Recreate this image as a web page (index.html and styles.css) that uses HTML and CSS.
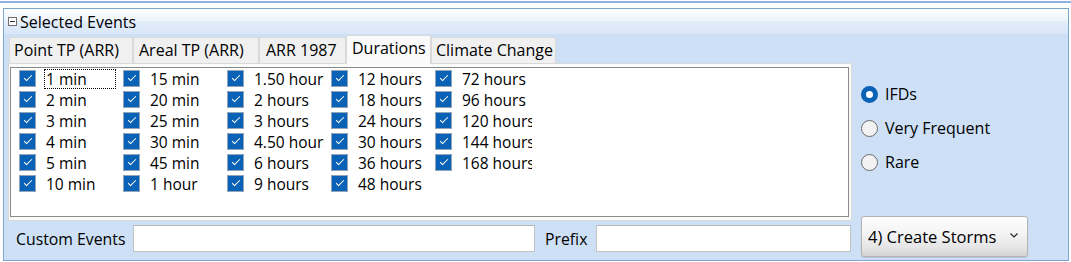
FILE: index.html
```html
<!DOCTYPE html>
<html>
<head>
    <meta charset="UTF-8">
    <meta name="viewport" content="width=device-width, initial-scale=1.0">
    <title>Selected Events</title>
    <link rel="stylesheet" href="styles.css">
</head>
<body>
    <div class="topline"></div>
    <div class="group">
        <div class="groupHead">
            <span class="collapse"></span>
            <span class="groupTitle">Selected Events</span>
        </div>
        <div class="groupBody">
            <div class="left">
                <div class="tabs">
                    <div class="tab tabPoint">Point TP (ARR)</div>
                    <div class="tab tabAreal">Areal TP (ARR)</div>
                    <div class="tab tab1987">ARR 1987</div>
                    <div class="tab tabDurations active">Durations</div>
                    <div class="tab tabClimate">Climate Change</div>
                </div>
                <div class="panel">
                    <div class="checkList">
                        <div class="item"><span class="cb"></span><span class="lbl focus">1 min</span></div>
                        <div class="item"><span class="cb"></span><span class="lbl">2 min</span></div>
                        <div class="item"><span class="cb"></span><span class="lbl">3 min</span></div>
                        <div class="item"><span class="cb"></span><span class="lbl">4 min</span></div>
                        <div class="item"><span class="cb"></span><span class="lbl">5 min</span></div>
                        <div class="item"><span class="cb"></span><span class="lbl">10 min</span></div>

                        <div class="item"><span class="cb"></span><span class="lbl">15 min</span></div>
                        <div class="item"><span class="cb"></span><span class="lbl">20 min</span></div>
                        <div class="item"><span class="cb"></span><span class="lbl">25 min</span></div>
                        <div class="item"><span class="cb"></span><span class="lbl">30 min</span></div>
                        <div class="item"><span class="cb"></span><span class="lbl">45 min</span></div>
                        <div class="item"><span class="cb"></span><span class="lbl">1 hour</span></div>

                        <div class="item"><span class="cb"></span><span class="lbl">1.50 hours</span></div>
                        <div class="item"><span class="cb"></span><span class="lbl">2 hours</span></div>
                        <div class="item"><span class="cb"></span><span class="lbl">3 hours</span></div>
                        <div class="item"><span class="cb"></span><span class="lbl">4.50 hours</span></div>
                        <div class="item"><span class="cb"></span><span class="lbl">6 hours</span></div>
                        <div class="item"><span class="cb"></span><span class="lbl">9 hours</span></div>

                        <div class="item"><span class="cb"></span><span class="lbl">12 hours</span></div>
                        <div class="item"><span class="cb"></span><span class="lbl">18 hours</span></div>
                        <div class="item"><span class="cb"></span><span class="lbl">24 hours</span></div>
                        <div class="item"><span class="cb"></span><span class="lbl">30 hours</span></div>
                        <div class="item"><span class="cb"></span><span class="lbl">36 hours</span></div>
                        <div class="item"><span class="cb"></span><span class="lbl">48 hours</span></div>

                        <div class="item"><span class="cb"></span><span class="lbl">72 hours</span></div>
                        <div class="item"><span class="cb"></span><span class="lbl">96 hours</span></div>
                        <div class="item"><span class="cb"></span><span class="lbl">120 hours</span></div>
                        <div class="item"><span class="cb"></span><span class="lbl">144 hours</span></div>
                        <div class="item"><span class="cb"></span><span class="lbl">168 hours</span></div>
                    </div>
                </div>
                <div class="fields">
                    <span class="fieldLabel customLabel">Custom Events</span>
                    <input type="text" class="textBox customBox">
                    <span class="fieldLabel prefixLabel">Prefix</span>
                    <input type="text" class="textBox prefixBox">
                </div>
            </div>
            <div class="right">
                <div class="radios">
                    <div class="radioRow"><span class="radio checked"></span><span class="radioText">IFDs</span></div>
                    <div class="radioRow"><span class="radio"></span><span class="radioText">Very Frequent</span></div>
                    <div class="radioRow"><span class="radio"></span><span class="radioText">Rare</span></div>
                </div>
                <button class="dropButton">
                    <span>4) Create Storms</span>
                    <svg class="chevron" width="8" height="5" viewBox="0 0 8 5"><polyline points="0.5,0.5 4,4 7.5,0.5" fill="none" stroke="#222" stroke-width="1.2"/></svg>
                </button>
            </div>
        </div>
    </div>
</body>
</html>
```

FILE: styles.css
```css
body {
    margin: 0;
    background: #fff;
    color: #000;
    font-family: "Open Sans", "Noto Sans", sans-serif;
}

.topline {
    height: 2px;
    margin-top: 1px;
    background: #8db2e3;
}

.group {
    margin: 5px 0 0 3px;
    width: 1066px;
    height: 253px;
    box-sizing: border-box;
    border: 1px solid #7ea3cf;
    background: #cde0f6;
    display: flex;
    flex-direction: column;
}

.groupHead {
    height: 25px;
    flex: none;
    display: flex;
    align-items: center;
    padding-left: 4px;
    background: linear-gradient(#fcfdfe 0%, #eff5fc 45%, #e3edf9 50%, #d9e7f8 100%);
}

.collapse {
    width: 9px;
    height: 9px;
    box-sizing: border-box;
    border: 1px solid #6f6f6f;
    background: #fff;
    display: flex;
    align-items: center;
    justify-content: center;
}

.collapse::before {
    content: "";
    width: 5px;
    height: 1px;
    background: #333;
}

.groupTitle {
    margin-left: 3px;
    font-size: 16px;
    line-height: 20px;
}

.groupBody {
    flex: 1;
    display: flex;
}

.left {
    width: 849px;
    flex: none;
    display: flex;
    flex-direction: column;
}

.tabs {
    height: 26px;
    margin: 3px 0 0 5px;
    display: flex;
    align-items: flex-end;
}

.tab {
    height: 26px;
    box-sizing: border-box;
    border: 1px solid #d9d9d9;
    border-bottom: none;
    background: #f0f0f0;
    padding-left: 4px;
    font-size: 16px;
    line-height: 24px;
    white-space: nowrap;
    overflow: hidden;
}

.tab.active {
    height: 29px;
    margin-bottom: -1px;
    background: #fafafa;
    position: relative;
    z-index: 1;
    line-height: 25px;
}

.tabPoint { width: 124px; }
.tabAreal { width: 126px; padding-left: 5px; }
.tab1987 { width: 87px; padding-left: 6px; }
.tabDurations { width: 85px; padding-left: 5px; }
.tabClimate { width: 125px; }

.panel {
    margin-left: 4px;
    width: 844px;
    height: 158px;
    flex: none;
    box-sizing: border-box;
    border: 1px solid #d9d9d9;
    background: #fafafa;
    padding: 3px 2px 3px 1px;
}

.checkList {
    width: 839px;
    height: 150px;
    box-sizing: border-box;
    border: 1px solid #8a8a8a;
    background: #fff;
    padding: 1px 0 0 8px;
    display: grid;
    grid-auto-flow: column;
    grid-template-rows: repeat(6, 21px);
    grid-auto-columns: 104px;
}

.item {
    display: flex;
    align-items: flex-start;
}

.cb {
    width: 17px;
    height: 17px;
    margin-top: 1px;
    margin-right: 8px;
    flex: none;
    box-sizing: border-box;
    border: 1px solid #93a3b8;
    background: #0a62b6;
    position: relative;
}

.cb::after {
    content: "";
    position: absolute;
    left: 4px;
    top: 4px;
    width: 7px;
    height: 3px;
    border-left: 1px solid #fff;
    border-bottom: 1px solid #fff;
    transform: rotate(-45deg);
}

.lbl {
    width: 72px;
    height: 20px;
    box-sizing: border-box;
    padding-left: 2px;
    font-size: 15.5px;
    line-height: 20px;
    white-space: nowrap;
    overflow: hidden;
}

.lbl.focus {
    outline: 1px dotted #000;
    outline-offset: -1px;
}

.fields {
    margin-top: 4px;
    height: 27px;
    padding-left: 12px;
    display: flex;
    align-items: center;
}

.fieldLabel {
    font-size: 15.8px;
    line-height: 20px;
    white-space: nowrap;
}

.customLabel { width: 117px; }

.prefixLabel {
    width: 51px;
    margin-left: 10px;
}

.textBox {
    height: 27px;
    box-sizing: border-box;
    margin: 0;
    border: 1px solid #c3c3c3;
    border-top-color: #b5b5b5;
    background: #fff;
    padding: 0 4px;
    font: inherit;
}

.customBox { width: 402px; }
.prefixBox { width: 255px; }

.right {
    flex: 1;
    padding-left: 8px;
    display: flex;
    flex-direction: column;
}

.radios {
    padding-top: 43px;
}

.radioRow {
    height: 34px;
    display: flex;
    align-items: center;
}

.radio {
    width: 17px;
    height: 17px;
    flex: none;
    box-sizing: border-box;
    border-radius: 50%;
    border: 1px solid #6c6c6c;
    background: #f2f2f2;
    margin-right: 7px;
}

.radio.checked {
    border: 5px solid #0a62b6;
    background: #fff;
}

.radioText {
    font-size: 16px;
    line-height: 20px;
}

.dropButton {
    width: 167px;
    height: 41px;
    margin: auto 0 3px 0;
    box-sizing: border-box;
    border: 1px solid #b4b4b4;
    border-radius: 3px;
    background: linear-gradient(#fefefe 0%, #f3f3f3 45%, #e4e4e4 80%, #d4d4d4 100%);
    box-shadow: 0 1px 1px rgba(0, 0, 0, 0.12);
    padding: 0 9px 0 6px;
    display: flex;
    align-items: center;
    justify-content: space-between;
    font-family: "Open Sans", "Noto Sans", sans-serif;
    font-size: 16.5px;
    color: #000;
}

.chevron {
    margin-top: -3px;
}
```
